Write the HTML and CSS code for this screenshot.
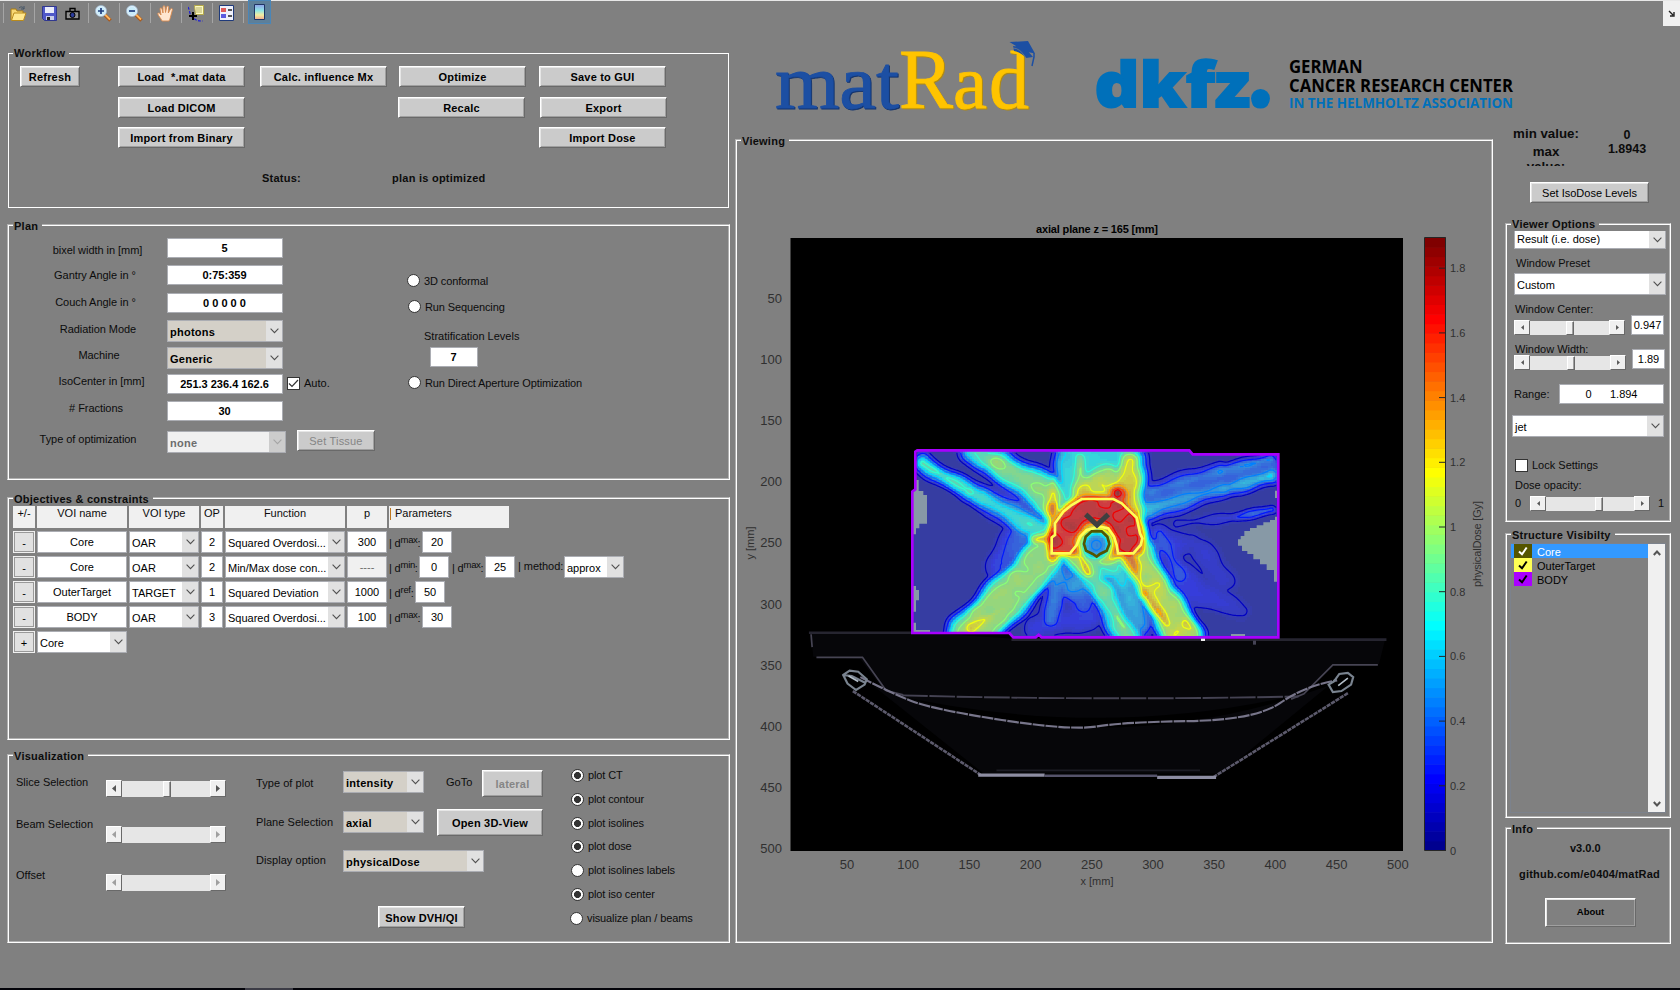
FILE: index.html
```html
<!DOCTYPE html>
<html lang="en">
<head>
<meta charset="utf-8">
<title>matRadGUI</title>
<link rel="stylesheet" href="styles.css">
</head>
<body>
<svg width="0" height="0" class="defs">
  <symbol id="chev" viewBox="0 0 9 6"><path d="M.6.7 4.5 4.6 8.4.7" fill="none" stroke="currentColor" stroke-width="1.1"/></symbol>
  <symbol id="al" viewBox="0 0 4 7"><path d="M4 0v7L0 3.5z" fill="currentColor"/></symbol>
  <symbol id="ar" viewBox="0 0 4 7"><path d="M0 0v7l4-3.500z" fill="currentColor"/></symbol>
  <symbol id="tick" viewBox="0 0 10 10"><path d="M1 5.500 4 8.200 8.700 1.500" fill="none" stroke="currentColor" stroke-width="2"/></symbol>
</svg>

<header class="toolbar">
  <span class="tool t-open"><svg width="17" height="17" viewBox="0 0 17 17"><path d="M1 15V4h5l1 2h6v3" fill="#f7d774" stroke="#a87b10"/><path d="M1.500 15.500 4 8h12l-2.500 7.500z" fill="#ffe88f" stroke="#b88a1c"/><path d="M9 3c2-2 4-1 5 1m0-3v3h-3" fill="none" stroke="#445566"/></svg></span>
  <span class="tool t-save"><svg width="15" height="15" viewBox="0 0 15 15"><path d="M.5.5h14v14h-12l-2-2z" fill="#4f58c8" stroke="#31388f"/><path d="M3 1h9v6H3z" fill="#e9ecfb"/><path d="M4 10h8v4H4z" fill="#c9cde8"/><path d="M5 11h3v3H5z" fill="#222"/></svg></span>
  <span class="tool t-cam"><svg width="15" height="13" viewBox="0 0 15 13"><path d="M5 1.500h5v3H5zM1 4.500h13v7.500H1z" fill="#8f8f8f" stroke="#000" stroke-width="1.400"/><circle cx="7.500" cy="8" r="2.500" fill="#2b3c9c" stroke="#000"/></svg></span>
  <span class="tool t-zin"><svg width="17" height="17" viewBox="0 0 17 17"><path d="m9.500 9.500 6 6" stroke="#a8581c" stroke-width="3.500"/><path d="m10 9.500 5 5" stroke="#ffb65c" stroke-width="1.800"/><circle cx="6" cy="6" r="5" fill="#c9ecfa" stroke="#e8f4ff" stroke-width="1.500"/><circle cx="6" cy="6" r="5.500" fill="none" stroke="#7fa3bb" stroke-width=".6"/><path d="M3 6h6M6 3v6" stroke="#223f80" stroke-width="1.700"/></svg></span>
  <span class="tool t-zout"><svg width="17" height="17" viewBox="0 0 17 17"><path d="m9.500 9.500 6 6" stroke="#a8581c" stroke-width="3.500"/><path d="m10 9.500 5 5" stroke="#ffb65c" stroke-width="1.800"/><circle cx="6" cy="6" r="5" fill="#c9ecfa" stroke="#e8f4ff" stroke-width="1.500"/><circle cx="6" cy="6" r="5.500" fill="none" stroke="#7fa3bb" stroke-width=".6"/><path d="M3 6h6" stroke="#223f80" stroke-width="1.700"/></svg></span>
  <span class="tool t-pan"><svg width="17" height="17" viewBox="0 0 17 17"><path d="M5 16C4 13 1 11 .7 8.500 1.500 7.500 3 8 4 10L3 4c0-1.500 1.700-1.500 2 0l1 4V2c0-1.600 2-1.600 2 0l.5 5.500L9.700 2c.4-1.400 2-1.200 1.900.3L11.300 8 13.500 4c.8-1.200 2.200-.5 1.900.8L13.500 12c-.5 2-1 3-1.500 4z" fill="#ffe6d0" stroke="#d98a4e" stroke-width=".9"/></svg></span>
  <span class="tool t-cur"><svg width="17" height="17" viewBox="0 0 17 17"><path d="M0 2c2 3 1 8 5 11s6 3 10 3" fill="none" stroke="#1a1ad8" stroke-dasharray="3 1.500" stroke-width="1.200"/><path d="M6.500.5h9v9h-8z" fill="#fdfbc2" stroke="#b3a84a"/><path d="M8 3h6M8 5h6M8 7h6" stroke="#b5ad6a"/><path d="M1 11h8M5 7v8" stroke="#000" stroke-width="2"/></svg></span>
  <span class="tool t-leg"><svg width="15" height="16" viewBox="0 0 15 16"><path d="M.5.500h14v15H.5z" fill="#eef0fb" stroke="#1f3a7a"/><path d="M2 3h5v4H2z" fill="#e05a5a"/><path d="M2 9h5v4H2z" fill="#5a5ae0"/><path d="M9 5h4M9 11h4" stroke="#222" stroke-width="1.300"/></svg></span>
  <span class="tool t-bar"><svg width="11" height="16" viewBox="0 0 11 16"><defs><linearGradient id="cbi" x2="0" y2="1"><stop stop-color="#8f9fe8"/><stop offset=".4" stop-color="#90e6e6"/><stop offset=".7" stop-color="#f3eea0"/><stop offset="1" stop-color="#f0a890"/></linearGradient></defs><path d="M.5.500h10v15H.5z" fill="url(#cbi)" stroke="#1f3565"/></svg></span>
  <span class="undock"><svg width="7" height="7" viewBox="0 0 7 7"><path d="m1 1 4 4M6 2v4H2" fill="none" stroke="#222" stroke-width="1.400"/></svg></span>
</header>

<main class="app">
  <div class="left">
    <section class="panel workflow">
      <h2>Workflow</h2>
      <div class="wf-cols">
        <div class="wf c1"><button class="refresh">Refresh</button></div>
        <div class="wf c2"><button>Load &nbsp;*.mat data</button><button>Load DICOM</button><button>Import from Binary</button></div>
        <div class="wf c3"><button>Calc. influence Mx</button></div>
        <div class="wf c4"><button class="in1">Optimize</button><button>Recalc</button></div>
        <div class="wf c5"><button>Save to GUI</button><button class="in1">Export</button><button>Import Dose</button></div>
      </div>
      <p class="status"><b>Status:</b><b class="state">plan is optimized</b></p>
    </section>

    <section class="panel plan">
      <h2>Plan</h2>
      <div class="p-labels"><span>bixel width in [mm]</span><span>Gantry Angle in °</span><span>Couch Angle in °</span><span>Radiation Mode</span><span>Machine</span><span>IsoCenter in [mm]</span><span># Fractions</span><span>Type of optimization</span></div>
      <div class="p-inputs">
        <span class="edit">5</span><span class="edit">0:75:359</span><span class="edit">0 0 0 0 0</span>
        <span class="sel tan"><i>photons</i><em><svg><use href="#chev"/></svg></em></span>
        <span class="sel tan"><i>Generic</i><em><svg><use href="#chev"/></svg></em></span>
        <span class="edit">251.3 236.4 162.6</span><span class="edit">30</span>
        <span class="sel off"><i>none</i><em><svg><use href="#chev"/></svg></em></span>
      </div>
      <div class="p-aux">
        <label class="auto"><span class="check"><svg width="11" height="11" viewBox="0 0 11 11"><path d="M1 5.500 4 8.500 10 2" fill="none" stroke="#333" stroke-width="1.200"/></svg></span>Auto.</label>
        <button class="tissue" disabled>Set Tissue</button>
      </div>
      <div class="p-opts">
        <label class="radio r1"><s></s>3D conformal</label>
        <label class="radio r2"><s></s>Run Sequencing</label>
        <span class="strat">Stratification Levels</span>
        <span class="edit lev">7</span>
        <label class="radio r3"><s></s>Run Direct Aperture Optimization</label>
      </div>
    </section>

    <section class="panel objectives">
      <h2>Objectives &amp; constraints</h2>
      <div class="orow head"><span>+/-</span><span>VOI name</span><span>VOI type</span><span>OP</span><span>Function</span><span>p</span><span class="par"><u></u>Parameters</span></div>
      <div class="orow"><span class="pm">-</span><span class="edit">Core</span><span class="sel"><i>OAR</i><em><svg><use href="#chev"/></svg></em></span><span class="edit">2</span><span class="sel"><i>Squared Overdosi...</i><em><svg><use href="#chev"/></svg></em></span><span class="edit">300</span><div class="params"><span class="d w33">| d<sup>max</sup>:</span><span class="edit">20</span></div></div>
      <div class="orow"><span class="pm">-</span><span class="edit">Core</span><span class="sel"><i>OAR</i><em><svg><use href="#chev"/></svg></em></span><span class="edit">2</span><span class="sel"><i>Min/Max dose con...</i><em><svg><use href="#chev"/></svg></em></span><span class="edit dis">----</span><div class="params"><span class="d w30">| d<sup>min</sup>:</span><span class="edit">0</span><span class="d w36">| d<sup>max</sup>:</span><span class="edit">25</span><span class="meth">| method:</span><span class="sel apx"><i>approx</i><em><svg><use href="#chev"/></svg></em></span></div></div>
      <div class="orow"><span class="pm">-</span><span class="edit">OuterTarget</span><span class="sel"><i>TARGET</i><em><svg><use href="#chev"/></svg></em></span><span class="edit">1</span><span class="sel"><i>Squared Deviation</i><em><svg><use href="#chev"/></svg></em></span><span class="edit">1000</span><div class="params"><span class="d w26">| d<sup>ref</sup>:</span><span class="edit">50</span></div></div>
      <div class="orow"><span class="pm">-</span><span class="edit">BODY</span><span class="sel"><i>OAR</i><em><svg><use href="#chev"/></svg></em></span><span class="edit">3</span><span class="sel"><i>Squared Overdosi...</i><em><svg><use href="#chev"/></svg></em></span><span class="edit">100</span><div class="params"><span class="d w33">| d<sup>max</sup>:</span><span class="edit">30</span></div></div>
      <div class="orow"><span class="pm">+</span><span class="sel"><i>Core</i><em><svg><use href="#chev"/></svg></em></span></div>
    </section>

    <section class="panel visual">
      <h2>Visualization</h2>
      <div class="v-labels"><span>Slice Selection</span><span>Beam Selection</span><span>Offset</span></div>
      <div class="v-sliders">
        <div class="slider"><span class="sb"><svg><use href="#al"/></svg></span><span class="track"><span class="thumb at41"></span></span><span class="sb"><svg><use href="#ar"/></svg></span></div>
        <div class="slider dim"><span class="sb"><svg><use href="#al"/></svg></span><span class="track"></span><span class="sb"><svg><use href="#ar"/></svg></span></div>
        <div class="slider dim"><span class="sb"><svg><use href="#al"/></svg></span><span class="track"></span><span class="sb"><svg><use href="#ar"/></svg></span></div>
      </div>
      <div class="v-types"><span>Type of plot</span><span>Plane Selection</span><span>Display option</span></div>
      <div class="v-mid">
        <div class="vm-row a"><span class="sel tan s81"><i>intensity</i><em><svg><use href="#chev"/></svg></em></span><span class="goto">GoTo</span><button class="lat" disabled>lateral</button></div>
        <div class="vm-row b"><span class="sel tan s81"><i>axial</i><em><svg><use href="#chev"/></svg></em></span><button class="open3d">Open 3D-View</button></div>
        <span class="sel tan s141"><i>physicalDose</i><em><svg><use href="#chev"/></svg></em></span>
        <button class="dvh">Show DVH/QI</button>
      </div>
      <div class="v-radios">
        <label class="radio on"><s></s>plot CT</label><label class="radio on"><s></s>plot contour</label><label class="radio on"><s></s>plot isolines</label><label class="radio on"><s></s>plot dose</label><label class="radio"><s></s>plot isolines labels</label><label class="radio on"><s></s>plot iso center</label><label class="radio last"><s></s>visualize plan / beams</label>
      </div>
    </section>
  </div>

  <div class="mid">
    <svg class="logos" width="758" height="112" viewBox="735 27 758 112">
      <g class="word blue"><text x="775" y="108" font-size="77" textLength="124" lengthAdjust="spacingAndGlyphs">mat</text></g>
      <g class="word gold"><text x="899" y="108" font-size="85" textLength="54" lengthAdjust="spacingAndGlyphs">R</text><text x="953" y="108" font-size="77" textLength="34" lengthAdjust="spacingAndGlyphs">a</text><text x="989" y="108" font-size="83" textLength="40" lengthAdjust="spacingAndGlyphs">d</text></g>
      <path d="M1009.500 42 1028 41l7 12.500-10-2zM1013 46q12 0 20 11l-7 1q-5-6-12-7z" fill="#1c4fa3"/>
      <path d="M1013 48q7 0 13 10" stroke="#808080" fill="none" stroke-width=".7"/>
      <path d="M1034 53v4l-2 9" stroke="#1c4fa3" stroke-width="1.500" fill="none"/>
      <text x="1094.500" y="107" class="dk" font-size="62" textLength="176" lengthAdjust="spacingAndGlyphs">dkfz.</text>
      <circle cx="1260.500" cy="98.500" r="9.500" fill="#0070ba"/>
      <g class="inst"><text x="1289" y="72.500" font-size="18.500" textLength="73.500" lengthAdjust="spacingAndGlyphs">GERMAN</text><text x="1289" y="92" font-size="18.500" textLength="224" lengthAdjust="spacingAndGlyphs">CANCER RESEARCH CENTER</text><text x="1289" y="108" font-size="15" fill="#0070ba" textLength="224" lengthAdjust="spacingAndGlyphs">IN THE HELMHOLTZ ASSOCIATION</text></g>
    </svg>
    <section class="panel viewing">
      <h2>Viewing</h2>
      <svg class="plot" width="754" height="800" viewBox="737 141 754 800">
        <defs>
          <clipPath id="body"><path d="M67 185 76 178 80 62H898L908 73H1165V622H372L358 609H67z"/></clipPath>
        </defs>
        <path d="M790.500 238h612.500v613H790.500z"/>
        <g id="couch" transform="scale(1.07143)" fill="none" stroke-width="1.600">
          <path d="M757 590h95l92 6h349l-6 24-42 1-28 26q-190 46-390 0l-24-32-44-2z" fill="#060609"/>
          <path d="M815 640Q1024 718 1240 640L1140 722H918z" fill="#060609"/>
          <path d="M755 590.500h97M944 597h350" stroke="#262530" stroke-width="2.400"/>
          <path d="M757 592l1 12M762 613.500h43l22 31 16 4M1286 620.500h-42l-27 27-12 5" stroke="#464453"/>
          <path d="M842 649q182 5 370 1" stroke="#444252" stroke-width="1.800" stroke-dasharray="24 1.500"/>
          <path d="M803 632Q830 646 850 654T935 672 1024 678 1110 673 1195 656 1248 635" stroke="#77758a" stroke-width="2" stroke-dasharray="11 1"/>
          <path d="M796 645 915 723M1258 647 1133 725" stroke="#5c5a6c" stroke-width="2.400" stroke-dasharray="4 .8"/>
          <path d="M913 723.500h62M1080 725.500h55" stroke="#8d8da2" stroke-width="3"/>
          <path d="M975 724h105" stroke="#55536a" stroke-width="2.400"/>
          <path d="M930 719h190" stroke="#1c1c24"/>
          <path d="M787 630l6-4 8 1 8 7-2 5-8 5-8-6zl8 1 12 6M1263 632l-5-4-8 1-5 7-5 3 4 7 8-1 9-6z" stroke="#79838f" stroke-width="2"/>
          <path d="M792 631l9 5M1258 633l-9 7" stroke="#b3bec8" stroke-width="1.500"/>
        </g>
        <g transform="translate(890 430) scale(.33333)">
          <g clip-path="url(#body)">
            <g id="dose" shape-rendering="crispEdges"></g>
            <path fill="#8799a6" d="M67 150H86V183H100V195H111V281H88V295H78V313H67zM67 468H78V480H87V511H78V545H67zM67 578H78V600H120V609H67zM1165 260H1155V270H1140V277H1120V286H1100V294H1080V303H1063V318H1052V328H1044V347H1056V363H1072V372H1090V388H1110V403H1130V420H1152V455H1165zM1155 182h10v22h-10zM1023 612h42v10h-42z"/>
            <g id="iso" fill="none" stroke-width="3.600" stroke-linecap="round"></g>
            <path d="M485 370V322L495 315V280L520 245 545 225 575 207H670L695 220 740 263 750 310 757 325 752 345 730 370H684L680 345 672 320 655 295 630 290 590 300 570 320 560 345 540 370z" fill="none" stroke="#ffff54" stroke-width="8"/>
            <path d="M605 304H635L652 320 658 342 650 362 630 372 620 380 608 372 588 362 582 342 587 320z" fill="none" stroke="#555500" stroke-width="8"/>
            <path d="M587 253 621 285 655 253" fill="none" stroke="#404040" stroke-width="15"/>
          </g>
          <path d="M67 185 76 178V65L82 61H898L908 73H1165V622H455L446 614 437 622H370L358 609H67z" fill="none" stroke="#a800ff" stroke-width="8"/>
          <path d="M933 626h12v7h-12z" fill="#eee"/><path d="M1089 632h9v12h-9z" fill="#454355"/>
        </g>
        <g id="cbar"></g>
        <path d="M1424.500 237.500h21v613h-21z" fill="none" stroke="#262626"/>
        <g id="labels" fill="#303030" class="axis"></g>
        <text x="1097" y="232.500" text-anchor="middle" class="ttl" textLength="122">axial plane z = 165 [mm]</text>
        <text x="1097" y="885" text-anchor="middle" class="sm">x [mm]</text>
        <text transform="translate(753.500 543) rotate(-90)" text-anchor="middle" class="sm">y [mm]</text>
        <text transform="translate(1481 544) rotate(-90)" text-anchor="middle" class="sm" textLength="86">physicalDose [Gy]</text>
      </svg>
    </section>
  </div>

  <div class="right">
    <div class="minmax"><div class="mm-l"><span>min value:</span><span class="mx">max value:</span></div><div class="mm-r"><span>0</span><span>1.8943</span></div></div>
    <button class="iso">Set IsoDose Levels</button>
    <section class="panel viewer">
      <h2>Viewer Options</h2>
      <span class="sel cut"><i>Result (i.e. dose)</i><em><svg><use href="#chev"/></svg></em></span>
      <span class="wp">Window Preset</span>
      <span class="sel cust"><i>Custom</i><em><svg><use href="#chev"/></svg></em></span>
      <div class="vrow c"><div><span>Window Center:</span><div class="slider sm111"><span class="sb"><svg><use href="#al"/></svg></span><span class="track"><span class="thumb at36"></span></span><span class="sb"><svg><use href="#ar"/></svg></span></div></div><span class="edit">0.947</span></div>
      <div class="vrow w"><div><span>Window Width:</span><div class="slider sm112"><span class="sb"><svg><use href="#al"/></svg></span><span class="track"><span class="thumb at37"></span></span><span class="sb"><svg><use href="#ar"/></svg></span></div></div><span class="edit">1.89</span></div>
      <div class="range"><span>Range:</span><span class="edit">0 &nbsp; &nbsp; &nbsp;1.894</span></div>
      <span class="sel jet"><i>jet</i><em><svg><use href="#chev"/></svg></em></span>
      <label class="lock"><span class="check"></span>Lock Settings</label>
      <span class="dop">Dose opacity:</span>
      <div class="opac"><span>0</span><div class="slider sm120"><span class="sb"><svg><use href="#al"/></svg></span><span class="track"><span class="thumb at49"></span></span><span class="sb"><svg><use href="#ar"/></svg></span></div><span>1</span></div>
    </section>
    <section class="panel structure">
      <h2>Structure Visibilty</h2>
      <div class="list">
        <ul><li class="cur"><span class="k core"><svg><use href="#tick"/></svg></span>Core</li><li><span class="k outer"><svg><use href="#tick"/></svg></span>OuterTarget</li><li><span class="k bod"><svg><use href="#tick"/></svg></span>BODY</li></ul>
        <div class="scroll"><svg width="8" height="6" viewBox="0 0 8 6"><path d="M.8 5 4 1.500 7.200 5" fill="none" stroke="#555" stroke-width="2"/></svg><svg width="8" height="6" viewBox="0 0 8 6"><path d="M.8 1 4 4.500 7.200 1" fill="none" stroke="#555" stroke-width="2"/></svg></div>
      </div>
    </section>
    <section class="panel info">
      <h2>Info</h2>
      <b class="ver">v3.0.0</b>
      <b class="git">github.com/e0404/matRad</b>
      <button class="about">About</button>
    </section>
  </div>
</main>
<footer class="task"><span></span></footer>
<script src="plot.js"></script>
</body>
</html>
```
FILE: styles.css
```css
* { box-sizing: border-box; }
html, body { margin: 0; height: 990px; overflow: hidden; }
body { width: 1680px; background: #808080; color: #0c0c0c; font: 11px/1 "Liberation Sans", Arial, sans-serif; display: flex; flex-direction: column; position: relative; }
.defs { position: absolute; }
span, button, b, label { white-space: nowrap; }
svg { display: block; flex: none; }
i, em, s, u { font-style: normal; text-decoration: none; }

.toolbar { height: 27px; flex: none; border-top: 1px solid #e8e8e8; display: flex; align-items: flex-start; }
.tool { height: 20px; margin: 2px 0 0; display: flex; align-items: center; border-left: 1px solid #a5a5a5; padding-left: 6px; }
.t-open { margin-left: 3px; width: 31px; }
.t-save { width: 31px; padding-left: 7px; }
.t-cam { width: 23px; border: 0; padding-left: 0; }
.t-zin, .t-zout, .t-pan, .t-cur, .t-leg { width: 31px; }
.t-bar { width: 5px; padding: 0; overflow: visible; }
.t-bar svg { box-sizing: content-box; padding: 3px 5px; border: 1px solid #4a86b8; background: #5d7f99; margin: -2px 0 0 4px; }
.undock { margin-left: auto; width: 17px; height: 25px; background: #f0f0f0; display: flex; align-items: center; justify-content: center; }

.app { display: flex; flex: none; height: 961px; }
.left { width: 723px; margin-left: 7px; flex: none; }
.mid { width: 758px; margin-left: 5px; flex: none; }
.right { width: 175px; margin-left: 12px; flex: none; }
.panel { position: relative; border: 1px solid; border-color: #b0b0b0 #fff #fff #b0b0b0; box-shadow: inset 1px 1px #fff, inset -1px -1px #b0b0b0; }
.panel h2 { position: absolute; left: 5px; top: -5px; margin: 0; padding: 0 4px 0 1px; background: #808080; font: bold 11px/12px "Liberation Sans", Arial, sans-serif; letter-spacing: .25px; white-space: nowrap; }

button { font: bold 11px/1 "Liberation Sans", Arial, sans-serif; letter-spacing: .2px; color: #000; background: #cbcbcb; border: 1px solid; border-color: #fff #696969 #696969 #fff; box-shadow: inset 1px 1px #e6e6e6, inset -1px -1px #a0a0a0; padding: 2px 0 0; height: 21px; flex: none; display: block; }
button:disabled { color: #858585; }
.edit { display: flex; align-items: center; justify-content: center; background: #fff; border: 1px solid #abadb3; color: #000; flex: none; }
.sel { display: flex; background: #fff; border: 1px solid #abadb3; height: 22px; color: #000; flex: none; }
.sel i { flex: 1; padding: 2px 0 0 2px; display: flex; align-items: center; white-space: nowrap; }
.sel em { width: 16px; background: #e1e1e1; display: flex; align-items: center; justify-content: center; color: #505050; }
.sel svg { width: 9px; height: 6px; }
.tan { background: #d4d0c8; }
.tan i, .off i { font-weight: bold; letter-spacing: .25px; }
.off { background: #f0f0f0; color: #6d6d6d; }
.off em { background: #ccc; color: #a5a5a5; }
.check { width: 13px; height: 13px; background: #fff; border: 1px solid #333; }
.radio { display: flex; align-items: center; height: 13px; gap: 4px; letter-spacing: -.12px; }
.radio s { width: 13px; height: 13px; border-radius: 50%; background: #fff; border: 1px solid #333; flex: none; }
.radio.on s { background: radial-gradient(circle, #333 0 3.200px, #fff 3.800px); }

.workflow { height: 155px; width: 721px; margin: 26px 0 0 1px; border-color: #fff; box-shadow: none; }
.workflow h2 { left: 4px; top: -7px; }
.wf-cols { display: flex; padding: 12px 0 0 11px; height: 95px; }
.wf { display: flex; flex-direction: column; }
.wf button { width: 127px; margin-bottom: 10px; }
.wf button:nth-child(2) { margin-bottom: 9px; }
.wf .refresh { width: 60px; }
.c1 { width: 98px; }
.c2 { width: 142px; }
.c3 { width: 138px; }
.c4 { width: 141px; }
.wf .in1 { margin-left: 1px; }
.status { margin: 24px 0 0 253px; display: flex; letter-spacing: .25px; }
.status .state { margin-left: 91px; }

.plan { height: 256px; margin-top: 16px; display: flex; }
.p-labels { width: 159px; padding-top: 12px; display: flex; flex-direction: column; text-align: center; line-height: 26px; letter-spacing: -.05px; }
.p-labels span:nth-child(1) { padding-left: 20px; }
.p-labels span:nth-child(2) { padding-left: 15px; margin-top: -1px; }
.p-labels span:nth-child(3) { padding-left: 16px; margin-top: 1px; }
.p-labels span:nth-child(4) { padding-left: 21px; margin-top: 1px; }
.p-labels span:nth-child(5) { padding-left: 23px; }
.p-labels span:nth-child(6) { padding-left: 28px; }
.p-labels span:nth-child(7) { padding-left: 17px; margin-top: 1px; }
.p-labels span:nth-child(8) { padding-left: 1px; margin-top: 5px; }
.p-inputs { width: 119px; padding-top: 13px; display: flex; flex-direction: column; }
.p-inputs > * { width: 116px; }
.p-inputs .edit, .lev { height: 20px; font-weight: bold; padding-right: 1px; }
.p-inputs > :nth-child(2) { margin-top: 7px; }
.p-inputs > :nth-child(3) { margin-top: 8px; }
.p-inputs > :nth-child(4) { margin-top: 7px; }
.p-inputs > :nth-child(5) { margin-top: 5px; }
.p-inputs > :nth-child(6) { margin-top: 5px; }
.p-inputs > :nth-child(7) { margin-top: 7px; }
.p-inputs > .off { margin-top: 10px; width: 119px; }
.p-aux { width: 121px; padding: 152px 0 0 1px; }
.auto, .lock { display: flex; align-items: center; height: 13px; gap: 4px; }
.tissue { width: 78px; margin: 40px 0 0 10px; font-weight: normal; }
.p-opts { padding-top: 49px; }
.p-opts .radio { padding-top: 1px; }
.p-opts .radio s { margin-top: -1px; }
.r2 { margin: 13px 0 0 1px; }
.strat { display: block; margin: 18px 0 0 17px; }
.lev { width: 48px; margin: 5px 0 0 23px; }
.r3 { margin: 9px 0 0 1px; }

.objectives { height: 243px; margin-top: 17px; padding: 8px 0 0 5px; }
.orow { display: grid; grid-template-columns: 22px 90px 70px 22px 120px 40px 260px; column-gap: 2px; height: 22px; margin-bottom: 3px; }
.head span { background: #f0f0f0; text-align: center; padding-top: 2px; }
.head .par { width: 120px; text-align: left; display: flex; gap: 4px; padding: 2px 0 0 1px; }
.par u { width: 1px; height: 12px; background: #c07820; }
.pm { background: #e1e1e1; border: 1px solid #f0f0f0; box-shadow: inset 0 0 0 1px #999; text-align: center; padding-top: 6px; color: #000; }
.dis { background: #f0f0f0; color: #6d6d6d; }
.params { display: flex; }
.params .edit { width: 30px; }
.d { padding-top: 7px; white-space: nowrap; letter-spacing: -.15px; }
.d sup { font-size: 9.500px; vertical-align: 4px; line-height: 0; letter-spacing: -.35px; }
.w33 { width: 33px; }
.w30 { width: 30px; }
.w26 { width: 26px; }
.w36 { width: 36px; padding-left: 3px; }
.meth { padding: 5px 2px 0 3px; width: 49px; letter-spacing: -.05px; }
.apx { width: 60px; }

.visual { height: 189px; margin-top: 14px; display: flex; }
.v-labels { width: 98px; padding: 22px 0 0 8px; display: flex; flex-direction: column; }
.v-labels span:nth-child(2) { margin-top: 31px; }
.v-labels span:nth-child(3) { margin-top: 40px; }
.v-sliders { width: 150px; padding-top: 25px; }
.slider { display: flex; width: 120px; height: 17px; }
.v-sliders .slider { margin-bottom: 29px; }
.v-sliders .slider:nth-child(2) { margin-bottom: 31px; }
.sb { width: 16px; background: #f0f0f0; border: 1px solid; border-color: #fff #696969 #696969 #fff; display: flex; align-items: center; justify-content: center; color: #555; flex: none; }
.sb svg { width: 4px; height: 7px; }
.dim .sb { color: #a0a0a0; }
.track { flex: 1; background: #e6e6e6; margin-top: 1px; }
.thumb { display: block; width: 8px; height: 100%; background: #f0f0f0; border: 1px solid; border-color: #fff #696969 #696969 #fff; box-shadow: inset -1px 0 #a0a0a0; }
.at41 { margin-left: 41px; }
.at36 { margin-left: 36px; }
.at37 { margin-left: 37px; }
.at49 { margin-left: 49px; }
.v-types { width: 87px; padding-top: 23px; display: flex; flex-direction: column; letter-spacing: .05px; }
.v-types span { margin-bottom: 28px; }
.v-types span:nth-child(2) { margin-bottom: 27px; }
.v-mid { width: 228px; padding-top: 15px; }
.vm-row { display: flex; height: 27px; }
.s81 { width: 81px; }
.s141 { width: 141px; margin-top: 14px; }
.a .sel { margin-top: 1px; }
.b { margin-top: 12px; }
.b .sel { margin-top: 2px; }
.goto { padding: 7px 0 0 22px; width: 58px; }
.lat { width: 61px; height: 27px; }
.open3d { width: 106px; height: 27px; margin-left: 13px; }
.dvh { width: 87px; height: 22px; margin: 34px 0 0 35px; }
.v-radios { padding-top: 14px; display: flex; flex-direction: column; gap: 10.800px; }
.last { margin-left: -1px; }

.logos { overflow: visible; }
.word { font-family: "Liberation Serif", serif; stroke-width: .8px; }
.blue { fill: #1c4fa3; stroke: #1c4fa3; filter: drop-shadow(1px 1px 0 #12336d); }
.gold { fill: #ffc400; stroke: #ffc400; filter: drop-shadow(1px 1px 0 #b08a10); }
.dk { font-family: "Open Sans", "Noto Sans", sans-serif; font-weight: 800; fill: #0070ba; stroke: #0070ba; stroke-width: 2px; }
.inst { font-family: "Open Sans", "Noto Sans", sans-serif; font-weight: 700; }
.viewing { height: 804px; }
.plot { margin: 1px; }
.axis, .sm { font-family: "Liberation Sans", Arial, sans-serif; font-size: 11px; }
.sm { fill: #303030; }
.ttl { font: bold 11px "Liberation Sans", Arial, sans-serif; }

.minmax { display: flex; height: 39px; margin-top: 100px; font-weight: bold; font-size: 13.300px; }
.mm-l { width: 83px; overflow: hidden; text-align: center; display: flex; flex-direction: column; }
.mm-l span { margin-left: -1px; }
.mm-l .mx { white-space: normal; width: 56px; margin: 4px 0 0 13px; line-height: 15px; }
.mm-r { width: 78px; padding-top: 2px; text-align: center; font-size: 12.500px; display: flex; flex-direction: column; gap: 1px; }
.iso { width: 119px; height: 21px; margin: 16px 0 0 25px; font-weight: normal; letter-spacing: 0; }
.viewer, .structure, .info { width: 166px; }
.viewer { height: 299px; margin-top: 20px; display: flex; flex-direction: column; align-items: flex-start; }
.viewer h2 { top: -6px; }
.cut { width: 152px; height: 18px; border-top: 0; margin: 7px 0 0 8px; }
.cut i { padding-top: 0; }
.wp { margin: 9px 0 0 10px; }
.cust { width: 152px; margin: 4px 0 0 8px; }
.vrow { display: flex; align-items: flex-end; margin-left: 8px; }
.vrow > div > span { display: block; margin: 0 0 5px 1px; }
.vrow .edit { height: 20px; width: 33px; }
.c { margin-top: 8px; height: 32px; }
.c .edit { margin: 0 0 0 6px; }
.w { margin-top: 8px; height: 27px; }
.vrow.w > div > span { margin-bottom: 0; }
.w .edit { margin: 0 0 1px 6px; }
.viewer .slider { height: 15px; }
.sm111 { width: 111px; }
.sm112 { width: 112px; }
.sm120 { width: 120px; }
.viewer .sb svg { width: 3px; height: 5px; }
.range { display: flex; margin: 14px 0 0 8px; align-items: center; }
.range span:first-child { width: 45px; }
.range .edit { width: 105px; height: 20px; }
.jet { width: 152px; margin: 11px 0 0 6px; }
.lock { margin: 22px 0 0 9px; }
.dop { margin: 8px 0 0 9px; }
.opac { display: flex; align-items: center; margin: 5px 0 0 9px; }
.opac > span { width: 15px; }
.opac > span:last-child { padding-left: 8px; }
.structure { height: 285px; margin-top: 11px; padding: 9px 4px 4px 4px; }
.list { height: 270px; border: 1px solid #7c828c; display: flex; justify-content: space-between; }
.list ul { list-style: none; margin: 0; padding: 0; flex: 1; color: #000; }
.list li { height: 14px; display: flex; align-items: center; padding: 2px 0 0 3px; }
.list .cur { background: #3399ff; color: #fff; }
.k { width: 18px; height: 14px; margin: -2px 5px 0 0; display: flex; align-items: center; justify-content: center; }
.k svg { width: 10px; height: 10px; }
.core { background: #555500; }
.outer { background: #ffff54; }
.bod { background: #aa00ff; }
.scroll { width: 17px; background: #f0f0f0; display: flex; flex-direction: column; justify-content: space-between; align-items: center; padding: 6px 0 5px; }
.info { height: 117px; margin-top: 9px; display: flex; flex-direction: column; }
.ver { margin: 15px 0 0 64px; }
.git { margin: 15px 0 0 13px; letter-spacing: .2px; }
.about { width: 91px; height: 29px; margin: 18px 0 0 39px; background: #808080; font: bold 9.500px "Liberation Sans", Arial, sans-serif; letter-spacing: 0; padding: 0 0 2px; }
.task { height: 2px; background: #04040a; flex: none; }
.task span { display: block; width: 48px; height: 2px; margin-left: 245px; background: #3c3c46; }
```
FILE: plot.js
```js
const NS = "http://www.w3.org/2000/svg";
const add = (parent, name, attrs, text) => {
  const el = document.createElementNS(NS, name);
  for (const k in attrs) el.setAttribute(k, attrs[k]);
  if (text !== undefined) el.textContent = text;
  parent.appendChild(el);
};
const unit = v => Math.max(0, Math.min(1, v));
const jet = f => {
  const t = f * 4;
  return [Math.min(t - 1.5, 4.5 - t), Math.min(t - 0.5, 3.5 - t), Math.min(t + 0.5, 2.5 - t)].map(v => 255 * unit(v));
};
const css = c => `rgb(${c.map(Math.round)})`;

// 64-entry jet colorbar
const bar = document.getElementById("cbar");
const h = 613 / 64;
for (let i = 0; i < 64; i++) {
  add(bar, "rect", { x: 1425, y: 850.5 - (i + 1) * h, width: 21, height: h + 0.5, fill: css(jet((i + 1) / 64)) });
}

const labels = document.getElementById("labels");
for (let i = 0; i < 10; i++) {
  const y = 850.5 - i * 64.7;
  add(labels, "path", { d: `M1439 ${y}h7`, stroke: "#262626" });
  add(labels, "text", { x: 1450, y: y + 4 }, String(i / 5));
}
for (let i = 1; i <= 10; i++) {
  add(labels, "text", { x: 782, y: 303 + (i - 1) * 61.1, "text-anchor": "end", "font-size": 13 }, i * 50);
  add(labels, "text", { x: 847 + (i - 1) * 61.2, y: 869, "text-anchor": "middle", "font-size": 13 }, i * 50);
}

// Beam segments: x, y, half width, dose at both ends, edge softness
const beams = [
  [98, 100, 18, 0.52, 240, 185, 22, 0.42, 8], [240, 185, 22, 0.42, 470, 310, 38, 0.42, 10],
  [250, 60, 34, 0.42, 320, 100, 38, 0.50, 10], [320, 100, 36, 0.50, 480, 200, 56, 0.52, 10],
  [620, 50, 125, 0.36, 620, 330, 125, 0.40, 8],
  [568, 85, 22, 0.50, 578, 240, 44, 0.62, 9], [490, 150, 16, 0.50, 490, 240, 30, 0.70, 9],
  [722, 95, 38, 0.63, 712, 300, 50, 0.70, 9], [640, 190, 90, 0.58, 640, 300, 105, 0.74, 12],
  [437, 328, 16, 0.68, 500, 328, 24, 0.80, 9], [487, 230, 16, 0.72, 487, 375, 24, 0.84, 9],
  [460, 385, 62, 0.52, 240, 620, 66, 0.54, 8], [345, 532, 8, 0.54, 245, 592, 24, 0.60, 8],
  [720, 340, 50, 0.58, 800, 480, 48, 0.54, 9], [800, 480, 48, 0.54, 878, 620, 60, 0.60, 8],
  [715, 370, 28, 0.82, 765, 490, 18, 0.74, 10], [765, 490, 18, 0.74, 832, 580, 18, 0.73, 9],
  [885, 580, 10, 0.68, 900, 595, 8, 0.70, 9],
  [560, 370, 42, 0.56, 640, 480, 36, 0.43, 9], [640, 480, 36, 0.43, 715, 630, 36, 0.50, 9],
  [680, 560, 6, 0.56, 705, 595, 10, 0.60, 8], [575, 385, 14, 0.78, 595, 430, 15, 0.78, 9],
  [505, 430, 30, 0.28, 480, 570, 24, 0.24, 11], [560, 470, 60, 0.28, 580, 510, 40, 0.20, 13],
  [670, 400, 40, 0.38, 750, 580, 38, 0.29, 11],
  [780, 185, 20, 0.27, 990, 125, 18, 0.24, 10], [990, 125, 18, 0.24, 1140, 88, 14, 0.33, 8],
  [780, 235, 28, 0.34, 1000, 175, 20, 0.28, 10], [1000, 175, 20, 0.28, 1142, 138, 22, 0.38, 7],
  [800, 215, 45, 0.19, 1140, 115, 40, 0.19, 8],
  [860, 280, 14, 0.10, 1040, 262, 12, 0.16, 10], [1040, 262, 8, 0.18, 1145, 238, 9, 0.25, 6],
  [810, 310, 25, 0.19, 870, 440, 24, 0.19, 12], [870, 460, 60, 0.13, 1060, 545, 24, 0.10, 12],
  [940, 370, 40, 0.11, 1000, 450, 40, 0.10, 14],
  [400, 320, 45, 0.22, 350, 410, 60, 0.15, 14], [780, 350, 40, 0.20, 900, 340, 40, 0.10, 18],
  [300, 170, 26, 0.07, 450, 250, 40, 0.20, 12],
  [430, 590, 30, 0.14, 600, 560, 40, 0.14, 12]
];
const edge = (d, w, s) => 1 / (1 + Math.exp((d - w) / s));
const dose = (x, y) => {
  let sum = 4e-8;
  for (const [ax, ay, aw, av, bx, by, bw, bv, s] of beams) {
    const dx = bx - ax, dy = by - ay;
    const t = unit(((x - ax) * dx + (y - ay) * dy) / (dx * dx + dy * dy));
    const d = Math.hypot(x - ax - t * dx, y - ay - t * dy);
    const wob = 3 * Math.sin(x / 19 + ay) + 3 * Math.sin(y / 16 + bx);
    const v = (av + t * (bv - av)) * edge(d + wob, aw + t * (bw - aw), s);
    sum += v ** 5;
  }
  const r = Math.hypot(x - 620, y - 335);
  const ring = 0.89 * edge(Math.abs(r - 100), 50, 8) * edge(y, 382, 8);
  const spot = Math.hypot(x - 683, y - 190);
  const halo = 0.86 * edge(spot, 34, 9);
  let v = Math.min((sum + ring ** 5 + halo ** 5) ** 0.2, 0.9);
  v += 0.018 * v * (Math.sin(x / 17 + 2 * Math.sin(y / 19)) + Math.sin(y / 13 + 2 * Math.sin(x / 23)));
  v = Math.max(v, 1.02 * edge(spot, 20, 5));
  const hole = edge(Math.hypot(x - 619, y - 345), 42, 7);
  return v * (1 - hole) + 0.24 * hole;
};

// Dose wash blended at 60 % over the grey of the CT
const wash = document.getElementById("dose");
const ct = [135, 153, 166];
const cell = 7;
for (let y = 58; y < 626; y += cell) {
  let start = 64, last = null;
  for (let x = 64; x <= 1176; x += cell) {
    const f = Math.round(dose(x + 3.5, y + 3.5) * 64) / 64;
    const color = x > 1169 ? null : css(jet(f).map((c, i) => 0.6 * c + 0.4 * ct[i]));
    if (color !== last) {
      if (last) add(wash, "rect", { x: start, y, width: x - start + 0.5, height: cell + 0.5, fill: last });
      start = x;
      last = color;
    }
  }
}

// Isolines by marching squares
const iso = document.getElementById("iso");
const st = 5, x0 = 72, y0 = 70, nx = 218, ny = 110;
const grid = Array.from({ length: ny }, (_, j) => Array.from({ length: nx }, (_, i) => dose(x0 + i * st, y0 + j * st)));
for (const level of [0.065, 0.15, 0.25, 0.34, 0.42, 0.51, 0.61, 0.71, 0.81, 0.89]) {
  let d = "";
  for (let j = 0; j < ny - 1; j++) {
    for (let i = 0; i < nx - 1; i++) {
      const c = [[0, 0], [1, 0], [1, 1], [0, 1]];
      const pts = [];
      for (let k = 0; k < 4; k++) {
        const [ax, ay] = c[k], [bx, by] = c[(k + 1) % 4];
        const a = grid[j + ay][i + ax], b = grid[j + by][i + bx];
        if ((a < level) !== (b < level)) {
          const t = (level - a) / (b - a);
          pts.push([x0 + st * (i + ax + t * (bx - ax)), y0 + st * (j + ay + t * (by - ay))].map(v => v.toFixed(1)));
        }
      }
      for (let k = 0; k + 1 < pts.length; k += 2) d += `M${pts[k]}L${pts[k + 1]}`;
    }
  }
  add(iso, "path", { d, stroke: css(jet(level)) });
}
```
